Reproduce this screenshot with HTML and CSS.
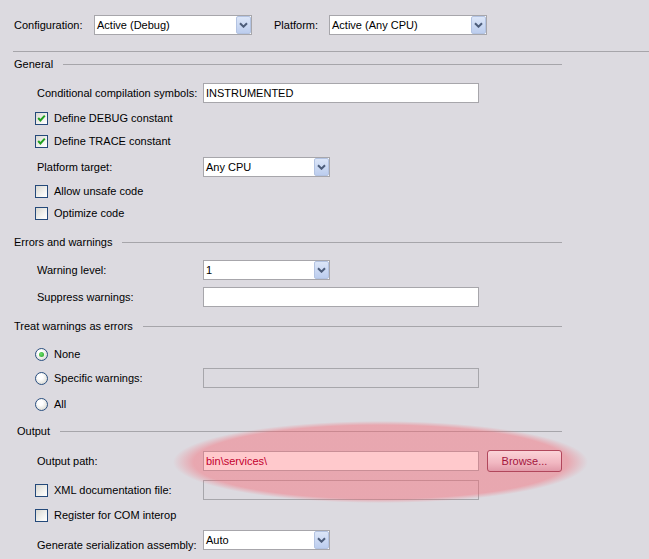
FILE: index.html
```html
<!DOCTYPE html>
<html>
<head>
<meta charset="utf-8">
<title>Build properties</title>
<link rel="stylesheet" href="styles.css">
</head>
<body>
<div class="page">
  <div class="topbar">
    <span class="top-label cfg">Configuration:</span>
    <div class="select wide"><span class="sel-text">Active (Debug)</span><span class="dd-btn"><svg width="9" height="6" viewBox="0 0 9 6"><path d="M1 1.2 L4.5 4.7 L8 1.2" fill="none" stroke="#4d5d7a" stroke-width="2"/></svg></span></div>
    <span class="top-label plat">Platform:</span>
    <div class="select wide"><span class="sel-text">Active (Any CPU)</span><span class="dd-btn"><svg width="9" height="6" viewBox="0 0 9 6"><path d="M1 1.2 L4.5 4.7 L8 1.2" fill="none" stroke="#4d5d7a" stroke-width="2"/></svg></span></div>
  </div>
  <div class="separator"></div>

  <div class="form">
    <div class="heading mt5"><span>General</span><span class="rule"></span></div>
    <div class="row mt12"><span class="label">Conditional compilation symbols:</span><div class="textbox">INSTRUMENTED</div></div>
    <div class="row check-row mt5"><span class="checkbox"><svg width="11" height="11" viewBox="0 0 11 11"><path d="M2.2 5 L4.4 7.4 L8.8 2.6" fill="none" stroke="#21a121" stroke-width="2"/></svg></span><span>Define DEBUG constant</span></div>
    <div class="row check-row mt3"><span class="checkbox"><svg width="11" height="11" viewBox="0 0 11 11"><path d="M2.2 5 L4.4 7.4 L8.8 2.6" fill="none" stroke="#21a121" stroke-width="2"/></svg></span><span>Define TRACE constant</span></div>
    <div class="row mt6"><span class="label">Platform target:</span><div class="select narrow"><span class="sel-text">Any CPU</span><span class="dd-btn"><svg width="9" height="6" viewBox="0 0 9 6"><path d="M1 1.2 L4.5 4.7 L8 1.2" fill="none" stroke="#4d5d7a" stroke-width="2"/></svg></span></div></div>
    <div class="row check-row mt4"><span class="checkbox"></span><span>Allow unsafe code</span></div>
    <div class="row check-row mt2"><span class="checkbox"></span><span>Optimize code</span></div>

    <div class="heading mt12"><span>Errors and warnings</span><span class="rule"></span></div>
    <div class="row mt11"><span class="label">Warning level:</span><div class="select narrow"><span class="sel-text">1</span><span class="dd-btn"><svg width="9" height="6" viewBox="0 0 9 6"><path d="M1 1.2 L4.5 4.7 L8 1.2" fill="none" stroke="#4d5d7a" stroke-width="2"/></svg></span></div></div>
    <div class="row mt7"><span class="label">Suppress warnings:</span><div class="textbox"></div></div>

    <div class="heading mt12"><span>Treat warnings as errors</span><span class="rule"></span></div>
    <div class="row check-row mt11"><span class="radio selected"></span><span>None</span></div>
    <div class="row check-row mt4"><span class="radio"></span><span class="check-label">Specific warnings:</span><div class="textbox disabled"></div></div>
    <div class="row check-row mt6"><span class="radio"></span><span>All</span></div>

    <div class="heading output-heading mt10"><span>Output</span><span class="rule"></span></div>
    <div class="row tall mt12"><span class="label">Output path:</span><div class="textbox highlighted">bin\services\</div><button class="browse">Browse...</button></div>
    <div class="row check-row mt8"><span class="checkbox"></span><span class="check-label">XML documentation file:</span><div class="textbox disabled"></div></div>
    <div class="row check-row mt5"><span class="checkbox"></span><span>Register for COM interop</span></div>
    <div class="row mt5"><span class="label low">Generate serialization assembly:</span><div class="select narrow"><span class="sel-text">Auto</span><span class="dd-btn"><svg width="9" height="6" viewBox="0 0 9 6"><path d="M1 1.2 L4.5 4.7 L8 1.2" fill="none" stroke="#4d5d7a" stroke-width="2"/></svg></span></div></div>
  </div>

  <div class="highlight"></div>
</div>
</body>
</html>
```

FILE: styles.css
```css
html, body {
  margin: 0;
  padding: 0;
  background: #dcdae0;
}
body {
  font-family: "Liberation Sans", Arial, sans-serif;
  font-size: 11px;
  line-height: 13px;
  color: #000;
}
.page {
  position: relative;
  width: 649px;
  height: 559px;
  overflow: hidden;
}
.topbar {
  display: flex;
  align-items: center;
  height: 20px;
  padding-top: 15px;
  padding-left: 14px;
}
.top-label { flex: none; }
.cfg { width: 80px; }
.plat { width: 55px; margin-left: 22px; }

.select {
  display: flex;
  align-items: stretch;
  box-sizing: border-box;
  height: 20px;
  border: 1px solid #a7a6ab;
  background: #fff;
  flex: none;
}
.select.wide { width: 158px; }
.select.narrow { width: 127px; }
.sel-text {
  flex: 1;
  padding-left: 2px;
  line-height: 18px;
  white-space: nowrap;
}
.dd-btn {
  box-sizing: border-box;
  width: 15px;
  height: 18px;
  border: 1px solid #b3c3e2;
  border-radius: 2px;
  background: linear-gradient(#dce6f8, #bccdee);
  display: flex;
  align-items: center;
  justify-content: center;
}

.separator {
  height: 1px;
  background: #a6a5aa;
  margin-top: 16px;
  margin-left: 13px;
}

.form { width: 562px; }

.heading {
  display: flex;
  align-items: center;
  height: 14px;
  padding-left: 14px;
}
.heading span:first-child { flex: none; }
.output-heading { padding-left: 17px; }
.rule {
  flex: 1;
  height: 1px;
  background: #a6a5aa;
  margin-left: 10px;
}

.row {
  display: flex;
  align-items: center;
  height: 20px;
  padding-left: 37px;
}
.row.tall { height: 22px; }
.check-row { padding-left: 35px; }
.label { width: 166px; flex: none; white-space: nowrap; }
.label.low { margin-top: 11px; }
.check-label { width: 149px; flex: none; white-space: nowrap; }

.textbox {
  box-sizing: border-box;
  width: 276px;
  height: 20px;
  border: 1px solid #a7a6ab;
  background: #fff;
  padding-left: 2px;
  line-height: 18px;
  flex: none;
}
.textbox.disabled { background: #dcdae0; }
.textbox.highlighted {
  position: relative;
  z-index: 2;
  background: #ffc9cc;
  border-color: #c98e96;
  color: #c3002e;
}
.browse {
  position: relative;
  z-index: 2;
  box-sizing: border-box;
  width: 75px;
  height: 22px;
  margin: 0 0 0 8px;
  padding: 0;
  border: 1px solid #b1475c;
  border-radius: 3px;
  background: linear-gradient(#fbd3d8, #f1b7c1 60%, #e19aa9);
  font-family: "Liberation Sans", Arial, sans-serif;
  font-size: 11px;
  color: #a3153d;
}

.checkbox {
  box-sizing: border-box;
  width: 13px;
  height: 13px;
  border: 1px solid #24497a;
  background: linear-gradient(135deg, #d9d8d2, #f6f6f4 70%, #fff);
  margin-right: 6px;
  flex: none;
  display: flex;
}
.checkbox svg { display: block; }

.radio {
  box-sizing: border-box;
  width: 13px;
  height: 13px;
  border: 1px solid #2a4f80;
  border-radius: 50%;
  background: radial-gradient(circle at 40% 35%, #fff 25%, #e8e8e4 60%, #c9c9c4 100%);
  margin-right: 6px;
  flex: none;
  display: flex;
  align-items: center;
  justify-content: center;
}
.radio.selected::after {
  content: "";
  width: 5px;
  height: 5px;
  border-radius: 50%;
  background: radial-gradient(circle at 40% 40%, #6ee06e, #1f9e1f);
}

.highlight {
  position: absolute;
  left: 173px;
  top: 421px;
  width: 415px;
  height: 82px;
  z-index: 1;
  pointer-events: none;
  background: radial-gradient(closest-side, rgba(248, 100, 112, 0.43) 90%, rgba(248, 100, 112, 0) 100%);
}

.mt2 { margin-top: 2px; }
.mt3 { margin-top: 3px; }
.mt4 { margin-top: 4px; }
.mt5 { margin-top: 5px; }
.mt6 { margin-top: 6px; }
.mt7 { margin-top: 7px; }
.mt8 { margin-top: 8px; }
.mt10 { margin-top: 10px; }
.mt11 { margin-top: 11px; }
.mt12 { margin-top: 12px; }
```
